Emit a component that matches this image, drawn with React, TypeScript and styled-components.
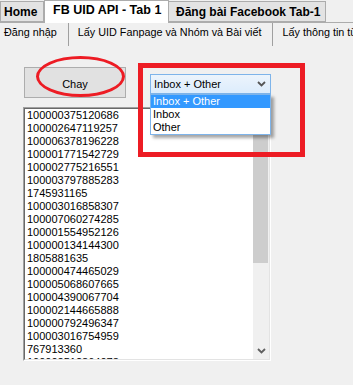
import React from "react";
import styled, { createGlobalStyle } from "styled-components";

const Global = createGlobalStyle`
  html, body { margin: 0; padding: 0; height: 100%; background: #f0f0f0; }
  body { font-family: "Liberation Sans", Arial, sans-serif; overflow: hidden; }
  #root { height: 100%; }
`;

const Page = styled.div`
  position: relative;
  width: 353px;
  height: 385px;
  background: #f0f0f0;
  overflow: hidden;
`;

const TabStrip = styled.div`
  display: flex;
  align-items: flex-end;
  height: 23px;
  box-sizing: border-box;
  border-bottom: 1px solid #acacac;
`;

const Tab = styled.div<{ $active?: boolean; $w: number; $pl: number }>`
  box-sizing: border-box;
  width: ${(p) => p.$w}px;
  height: ${(p) => (p.$active ? 23 : 21)}px;
  margin-bottom: ${(p) => (p.$active ? -1 : 0)}px;
  padding-left: ${(p) => p.$pl}px;
  padding-top: ${(p) => (p.$active ? 1 : 2)}px;
  background: ${(p) => (p.$active ? "#ffffff" : "#e3e3e3")};
  border: 1px solid #acacac;
  border-bottom: ${(p) => (p.$active ? "none" : "1px solid #acacac")};
  ${(p) => (p.$active ? "" : "border-left: none;")}
  font-weight: bold;
  font-size: ${(p) => (p.$active ? 12.5 : 12)}px;
  line-height: 17px;
  color: #000;
  white-space: nowrap;
  overflow: hidden;
  &:first-child { border-left: 1px solid #acacac; }
`;

const SubStrip = styled.div`
  display: flex;
  align-items: flex-end;
  height: 23px;
  font-size: 10.8px;
  color: #000;
  white-space: nowrap;
`;

const SubItem = styled.div<{ $first?: boolean }>`
  display: flex;
  align-items: center;
  height: 18px;
  padding: 0 11px 5px ${(p) => (p.$first ? 4 : 9)}px;
  border-left: ${(p) => (p.$first ? "none" : "1px solid #a0a0a0")};
  line-height: 13px;
`;

const Content = styled.div`
  padding: 21px 0 0 23px;
`;

const TopRow = styled.div`
  display: flex;
  align-items: flex-start;
`;

const Button = styled.div`
  box-sizing: border-box;
  margin-left: 1px;
  width: 102px;
  height: 31px;
  background: #e1e1e1;
  border: 1px solid #adadad;
  display: flex;
  align-items: center;
  justify-content: center;
  font-size: 11px;
  padding-top: 2px;
  color: #000;
`;

const ComboWrap = styled.div`
  position: relative;
  margin-left: 24px;
  margin-top: 7px;
  width: 121px;
`;

const Combo = styled.div`
  box-sizing: border-box;
  height: 20px;
  border: 1px solid #7eb4ea;
  background: linear-gradient(#ecf4fc, #dcecfc);
  display: flex;
  align-items: center;
  justify-content: space-between;
  padding: 0 4px 0 3px;
  font-size: 11px;
  color: #000;
`;

const DropList = styled.div`
  position: absolute;
  top: 20px;
  left: 0;
  width: 121px;
  box-sizing: border-box;
  background: #fff;
  border: 1px solid #7eb4ea;
  box-shadow: 3px 3px 3px rgba(0, 0, 0, 0.35);
  z-index: 3;
`;

const DropItem = styled.div<{ $sel?: boolean }>`
  height: 13px;
  line-height: 13px;
  font-size: 11px;
  padding-left: 2px;
  background: ${(p) => (p.$sel ? "#3399ff" : "#fff")};
  color: ${(p) => (p.$sel ? "#fff" : "#000")};
`;

const TextBox = styled.div`
  margin-top: 9px;
  width: 248px;
  height: 254px;
  box-sizing: border-box;
  border-top: 1px solid #a0a0a0;
  border-left: 1px solid #a0a0a0;
  border-right: 1px solid #ffffff;
  border-bottom: 1px solid #ffffff;
`;

const TextInner = styled.div`
  height: 100%;
  box-sizing: border-box;
  border-top: 1px solid #696969;
  border-left: 1px solid #696969;
  border-right: 1px solid #e3e3e3;
  border-bottom: 1px solid #e3e3e3;
  display: flex;
  background: #fff;
`;

const Lines = styled.div`
  flex: 1;
  overflow: hidden;
  padding-left: 2px;
  font-size: 11px;
  line-height: 13px;
  color: #000;
`;

const ScrollBar = styled.div`
  width: 16px;
  background: #f0f0f0;
  display: flex;
  flex-direction: column;
`;

const ScrollArrow = styled.div`
  height: 17px;
  display: flex;
  align-items: center;
  justify-content: center;
`;

const Thumb = styled.div`
  height: 137px;
  margin-right: 1px;
  background: #cdcdcd;
`;

const Spacer = styled.div`
  flex: 1;
`;

const RedEllipse = styled.div`
  position: absolute;
  left: 36px;
  top: 56px;
  width: 89px;
  height: 41px;
  box-sizing: border-box;
  border: 3.5px solid #ed1c24;
  border-radius: 50%;
  z-index: 4;
`;

const RedRect = styled.div`
  position: absolute;
  left: 138px;
  top: 63px;
  width: 167px;
  height: 94px;
  box-sizing: border-box;
  border: 5px solid #ed1c24;
  z-index: 4;
`;

const Chevron = ({ color }: { color: string }) => (
  <svg width="9" height="6" viewBox="0 0 9 6">
    <polyline points="1,1 4.5,4.5 8,1" fill="none" stroke={color} strokeWidth="1.8" />
  </svg>
);

const ids = [
  "100000375120686",
  "100002647119257",
  "100006378196228",
  "100001771542729",
  "100002775216551",
  "100003797885283",
  "1745931165",
  "100003016858307",
  "100007060274285",
  "100001554952126",
  "100000134144300",
  "1805881635",
  "100000474465029",
  "100005068607665",
  "100004390067704",
  "100002144665888",
  "100000792496347",
  "100003016754959",
  "767913360",
  "100002512864073",
];

export default function App() {
  return (
    <>
      <Global />
      <Page>
        <TabStrip>
          <Tab $w={44} $pl={3}>Home</Tab>
          <Tab $active $w={125} $pl={8}>FB UID API - Tab 1</Tab>
          <Tab $w={157} $pl={7}>Đăng bài Facebook Tab-1</Tab>
        </TabStrip>
        <SubStrip>
          <SubItem $first>Đăng nhập</SubItem>
          <SubItem>Lấy UID Fanpage và Nhóm và Bài viết</SubItem>
          <SubItem>Lấy thông tin từ UID</SubItem>
        </SubStrip>
        <Content>
          <TopRow>
            <Button>Chay</Button>
            <ComboWrap>
              <Combo>
                <span>Inbox + Other</span>
                <Chevron color="#555" />
              </Combo>
              <DropList>
                <DropItem $sel>Inbox + Other</DropItem>
                <DropItem>Inbox</DropItem>
                <DropItem>Other</DropItem>
              </DropList>
            </ComboWrap>
          </TopRow>
          <TextBox>
            <TextInner>
              <Lines>
                {ids.map((id, i) => (
                  <div key={i}>{id}</div>
                ))}
              </Lines>
              <ScrollBar>
                <ScrollArrow />
                <Thumb />
                <Spacer />
                <ScrollArrow>
                  <Chevron color="#606060" />
                </ScrollArrow>
              </ScrollBar>
            </TextInner>
          </TextBox>
        </Content>
        <RedEllipse />
        <RedRect />
      </Page>
    </>
  );
}
